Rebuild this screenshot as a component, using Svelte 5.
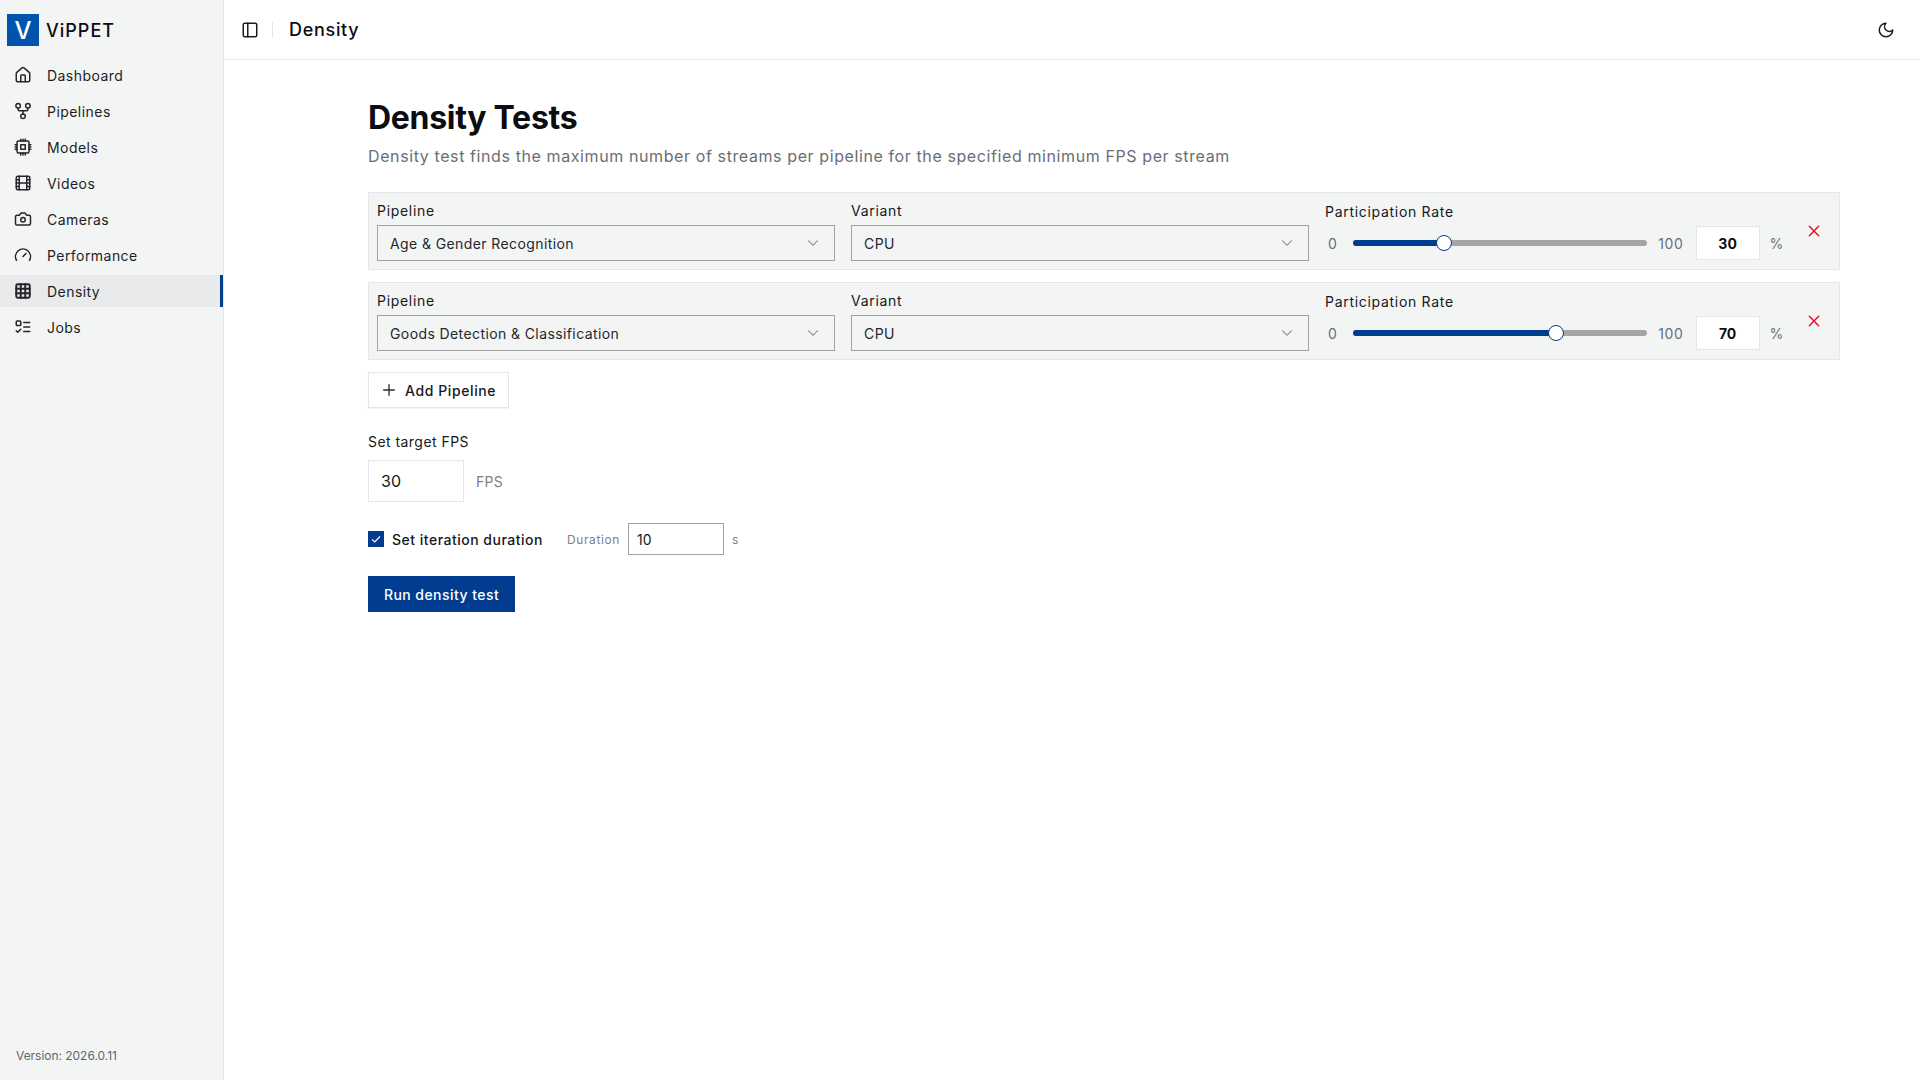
<script lang="ts">
  const navItems = [
    { label: 'Dashboard', icon: '<path d="M15 21v-8a1 1 0 0 0-1-1h-4a1 1 0 0 0-1 1v8"/><path d="M3 10a2 2 0 0 1 .709-1.528l7-5.999a2 2 0 0 1 2.582 0l7 5.999A2 2 0 0 1 21 10v9a2 2 0 0 1-2 2H5a2 2 0 0 1-2-2z"/>' },
    { label: 'Pipelines', icon: '<circle cx="12" cy="19" r="3"/><circle cx="5.5" cy="5" r="3"/><circle cx="18.5" cy="5" r="3"/><path d="M18.5 8v2c0 .8-.5 1.500-1.500 1.500H7c-1 0-1.500-.7-1.500-1.500V8"/><path d="M12 11.500V16"/>' },
    { label: 'Models', icon: '<rect x="4" y="4" width="16" height="16" rx="2"/><rect x="9" y="9" width="6" height="6"/><path d="M15 1.500v2.500M12 1.500v2.500M9 1.500v2.500M15 20v2.500M12 20v2.500M9 20v2.500M1.500 15h2.500M1.500 12h2.500M1.500 9h2.500M20 15h2.500M20 12h2.500M20 9h2.500"/>' },
    { label: 'Videos', icon: '<rect x="3" y="3" width="18" height="18" rx="2"/><path d="M7 3v18M3 7.500h4M3 12h18M3 16.500h4M17 3v18M17 7.500h4M17 16.500h4"/>' },
    { label: 'Cameras', icon: '<path d="M14.500 4h-5L7 7H4a2 2 0 0 0-2 2v9a2 2 0 0 0 2 2h16a2 2 0 0 0 2-2V9a2 2 0 0 0-2-2h-3l-2.500-3z"/><circle cx="12" cy="13" r="3"/>' },
    { label: 'Performance', icon: '<path d="m12 14 4-4"/><path d="M3.340 19a10 10 0 1 1 17.320 0"/>' },
    { label: 'Density', icon: '<g stroke-width="2.600"><rect x="3" y="3" width="18" height="18" rx="2"/><path d="M3 9h18M3 15h18M9 3v18M15 3v18"/></g>', active: true },
    { label: 'Jobs', icon: '<rect x="3" y="4" width="6" height="6" rx="1"/><path d="m3 17 2 2 4-4"/><path d="M13 6h8M13 12h8M13 18h8"/>' }
  ]

  const pipelines = [
    { name: 'Age & Gender Recognition', variant: 'CPU', rate: 30 },
    { name: 'Goods Detection & Classification', variant: 'CPU', rate: 70 }
  ]

  // thumb stays inside the track, so its centre runs over width minus thumb size
  const thumbPos = (rate: number) => `calc(7px + (100% - 14px) * ${rate / 100})`
</script>

<div class="app">
  <aside class="sidebar">
    <div class="brand">
      <span class="logo">V</span>
      <span class="brand-name">ViPPET</span>
    </div>
    <nav class="nav">
      {#each navItems as item}
        <div class="nav-item" class:active={item.active}>
          <svg class="nav-icon" viewBox="0 0 24 24">{@html item.icon}</svg>
          <span>{item.label}</span>
        </div>
      {/each}
    </nav>
    <div class="version">Version: 2026.0.11</div>
  </aside>

  <div class="main">
    <header class="topbar">
      <svg class="top-icon" viewBox="0 0 24 24"><rect x="3" y="3" width="18" height="18" rx="2"/><path d="M9 3v18"/></svg>
      <span class="divider"></span>
      <h2 class="top-title">Density</h2>
      <svg class="top-icon moon" viewBox="0 0 24 24"><path d="M12 3a6 6 0 0 0 9 9 9 9 0 1 1-9-9Z"/></svg>
    </header>

    <main class="content">
      <h1>Density Tests</h1>
      <p class="lead">Density test finds the maximum number of streams per pipeline for the specified minimum FPS per stream</p>

      <div class="rows">
        {#each pipelines as p}
          <div class="row">
            <div class="field">
              <span class="label">Pipeline</span>
              <div class="select">
                <span>{p.name}</span>
                <svg class="chevron" viewBox="0 0 24 24"><path d="m6 9 6 6 6-6"/></svg>
              </div>
            </div>
            <div class="field">
              <span class="label">Variant</span>
              <div class="select">
                <span>{p.variant}</span>
                <svg class="chevron" viewBox="0 0 24 24"><path d="m6 9 6 6 6-6"/></svg>
              </div>
            </div>
            <div class="field rate">
              <span class="label rate-label">Participation Rate</span>
              <div class="rate-line">
                <span class="bound zero">0</span>
                <div class="track">
                  <div class="fill" style="width: {thumbPos(p.rate)}"></div>
                  <div class="thumb" style="left: {thumbPos(p.rate)}"></div>
                </div>
                <span class="bound hundred">100</span>
                <input class="rate-input" value={p.rate} readonly />
                <span class="bound percent">%</span>
                <svg class="remove" viewBox="0 0 24 24"><path d="M5 5l14 14M19 5 5 19"/></svg>
              </div>
            </div>
          </div>
        {/each}
      </div>

      <button class="add-btn">
        <svg class="plus" viewBox="0 0 24 24"><path d="M12 4v16M4 12h16"/></svg>
        Add Pipeline
      </button>

      <div class="fps-label">Set target FPS</div>
      <div class="fps-line">
        <input class="fps-input" value="30" readonly />
        <span class="fps-unit">FPS</span>
      </div>

      <div class="duration-line">
        <span class="checkbox">
          <svg viewBox="0 0 16 16"><path d="m4 8.300 2.700 2.700L12 5.500"/></svg>
        </span>
        <span class="check-label">Set iteration duration</span>
        <span class="duration-label">Duration</span>
        <input class="duration-input" value="10" readonly />
        <span class="duration-unit">s</span>
      </div>

      <button class="run-btn">Run density test</button>
    </main>
  </div>
</div>

<style>
  :global(body) {
    margin: 0;
    background: #fff;
    color: #111317;
    font-family: Inter, "Noto Sans", sans-serif;
  }

  .app {
    display: flex;
    height: 1080px;
    overflow: hidden;
  }

  .sidebar {
    width: 223px;
    flex: none;
    display: flex;
    flex-direction: column;
    background: #f3f5f5;
    border-right: 1px solid #e4e5e7;
  }

  .brand {
    display: flex;
    align-items: center;
    gap: 7px;
    height: 32px;
    padding: 14px 7px 13px;
  }

  .logo {
    width: 32px;
    height: 32px;
    display: flex;
    align-items: center;
    justify-content: center;
    background: #0054ae;
    color: #fff;
    font-size: 24px;
    font-weight: 500;
  }

  .brand-name {
    font-size: 18px;
    font-weight: 500;
    letter-spacing: 1px;
    color: #0b0d10;
  }

  .nav {
    display: flex;
    flex-direction: column;
    flex: 1;
  }

  .nav-item {
    height: 32px;
    margin-bottom: 4px;
    display: flex;
    align-items: center;
    gap: 15px;
    padding-left: 14px;
    font-size: 14px;
    letter-spacing: 0.45px;
    color: #1c1e24;
    box-sizing: border-box;
  }

  .nav-item.active {
    background: #e9eaec;
    border-right: 3px solid #003c8f;
  }

  .nav-icon {
    width: 18px;
    height: 18px;
    flex: none;
    fill: none;
    stroke: #24262b;
    stroke-width: 2;
    stroke-linecap: round;
    stroke-linejoin: round;
  }

  .version {
    padding: 0 16px 17px;
    font-size: 12px;
    letter-spacing: -0.03px;
    color: #62656c;
  }

  .main {
    flex: 1;
    min-width: 0;
  }

  .topbar {
    height: 59px;
    display: flex;
    align-items: center;
    padding: 0 25px 0 17px;
    border-bottom: 1px solid #e4e5e7;
  }

  .top-icon {
    width: 18px;
    height: 18px;
    fill: none;
    stroke: #1b1d22;
    stroke-width: 2;
    stroke-linecap: round;
    stroke-linejoin: round;
  }

  .divider {
    width: 1px;
    height: 16px;
    margin: 0 16px 0 13px;
    background: #e4e5e7;
  }

  .top-title {
    margin: 0;
    font-size: 18px;
    font-weight: 500;
    letter-spacing: 0.7px;
    color: #0b0d10;
  }

  .moon {
    margin-left: auto;
  }

  .content {
    padding: 36px 80px 0 144px;
  }

  h1 {
    margin: 0;
    font-size: 32px;
    line-height: 44px;
    font-weight: 700;
    letter-spacing: -0.3px;
    color: #0b0d10;
  }

  .lead {
    margin: 4px 0 0;
    font-size: 16px;
    line-height: 24px;
    letter-spacing: 0.6px;
    color: #6a6d75;
  }

  .rows {
    display: flex;
    flex-direction: column;
    gap: 12px;
    margin-top: 24px;
  }

  .row {
    height: 78px;
    box-sizing: border-box;
    display: grid;
    grid-template-columns: 1fr 1fr 506px;
    gap: 16px;
    padding: 0 8px;
    background: #f3f5f5;
    border: 1px solid #e6e7e8;
  }

  .field {
    min-width: 0;
  }

  .label {
    display: block;
    margin-top: 8px;
    height: 24px;
    line-height: 20px;
    font-size: 14px;
    letter-spacing: 0.7px;
    color: #16181d;
  }

  .rate-label {
    margin-top: 9px;
  }

  .select {
    height: 36px;
    box-sizing: border-box;
    display: flex;
    align-items: center;
    justify-content: space-between;
    padding: 0 12px;
    border: 1px solid #a3a3a3;
    font-size: 14px;
    letter-spacing: 0.4px;
    color: #25272d;
  }

  .chevron {
    width: 18px;
    height: 18px;
    fill: none;
    stroke: #9a9a9d;
    stroke-width: 1.500;
    stroke-linecap: round;
    stroke-linejoin: round;
  }

  .rate-line {
    display: flex;
    align-items: center;
    height: 34px;
  }

  .bound {
    font-size: 14px;
    letter-spacing: 0.3px;
    color: #6a6d75;
  }

  .zero {
    margin-left: 3px;
  }

  .track {
    position: relative;
    width: 294px;
    height: 6px;
    margin: 0 11px 0 16px;
    border-radius: 3px;
    background: #a5a5a5;
  }

  .fill {
    height: 100%;
    border-radius: 3px;
    background: #003c8f;
  }

  .thumb {
    position: absolute;
    top: 50%;
    width: 14px;
    height: 14px;
    transform: translate(-50%, -50%);
    border-radius: 50%;
    background: #fff;
    border: 1px solid #003c8f;
  }

  .hundred {
    letter-spacing: 0.7px;
  }

  .rate-input {
    width: 64px;
    height: 34px;
    box-sizing: border-box;
    margin-left: 12px;
    border: 1px solid #e4e5e7;
    background: #fff;
    outline: none;
    text-align: center;
    font: 700 14px Inter, sans-serif;
    color: #0b0d10;
  }

  .percent {
    margin-left: 10px;
  }

  .remove {
    width: 16px;
    height: 16px;
    margin: -24px 0 0 22px;
    fill: none;
    stroke: #e5112d;
    stroke-width: 2.200;
    stroke-linecap: round;
  }

  .add-btn {
    display: flex;
    align-items: center;
    gap: 8px;
    width: 141px;
    height: 36px;
    margin-top: 12px;
    padding: 0 0 0 12px;
    box-sizing: border-box;
    background: #fff;
    border: 1px solid #e4e5e7;
    font: 500 14px Inter, sans-serif;
    letter-spacing: 0.6px;
    color: #16181d;
    box-shadow: 0 1px 1px rgba(0, 0, 0, 0.04);
  }

  .plus {
    width: 16px;
    height: 16px;
    fill: none;
    stroke: #2a2c31;
    stroke-width: 2;
    stroke-linecap: round;
  }

  .fps-label {
    margin-top: 24px;
    font-size: 14px;
    line-height: 20px;
    letter-spacing: 0.45px;
    color: #16181d;
  }

  .fps-line {
    display: flex;
    align-items: center;
    gap: 12px;
    margin-top: 8px;
  }

  .fps-input {
    width: 96px;
    height: 42px;
    box-sizing: border-box;
    padding: 0 12px;
    border: 1px solid #e4e5e7;
    outline: none;
    font: 400 16px Inter, sans-serif;
    color: #16181d;
  }

  .fps-unit {
    font-size: 14px;
    letter-spacing: 0.3px;
    color: #7d8087;
  }

  .duration-line {
    display: flex;
    align-items: center;
    height: 32px;
    margin-top: 21px;
  }

  .checkbox {
    width: 16px;
    height: 16px;
    background: #003c8f;
    display: flex;
  }

  .checkbox svg {
    fill: none;
    stroke: #fff;
    stroke-width: 1.200;
  }

  .check-label {
    margin-left: 8px;
    width: 175px;
    font-size: 14px;
    font-weight: 500;
    letter-spacing: 0.5px;
    color: #16181d;
  }

  .duration-label {
    font-size: 12px;
    letter-spacing: 0.6px;
    color: #7d8087;
  }

  .duration-input {
    width: 96px;
    height: 32px;
    box-sizing: border-box;
    margin-left: 8px;
    padding: 0 8px;
    border: 1px solid #a3a3a3;
    outline: none;
    font: 400 14px Inter, sans-serif;
    color: #16181d;
  }

  .duration-unit {
    margin-left: 8px;
    font-size: 12px;
    color: #7d8087;
  }

  .run-btn {
    display: block;
    width: 147px;
    height: 36px;
    margin-top: 21px;
    padding: 0;
    border: none;
    background: #003c8f;
    color: #fff;
    font: 500 14px Inter, sans-serif;
    letter-spacing: 0.45px;
  }
</style>
